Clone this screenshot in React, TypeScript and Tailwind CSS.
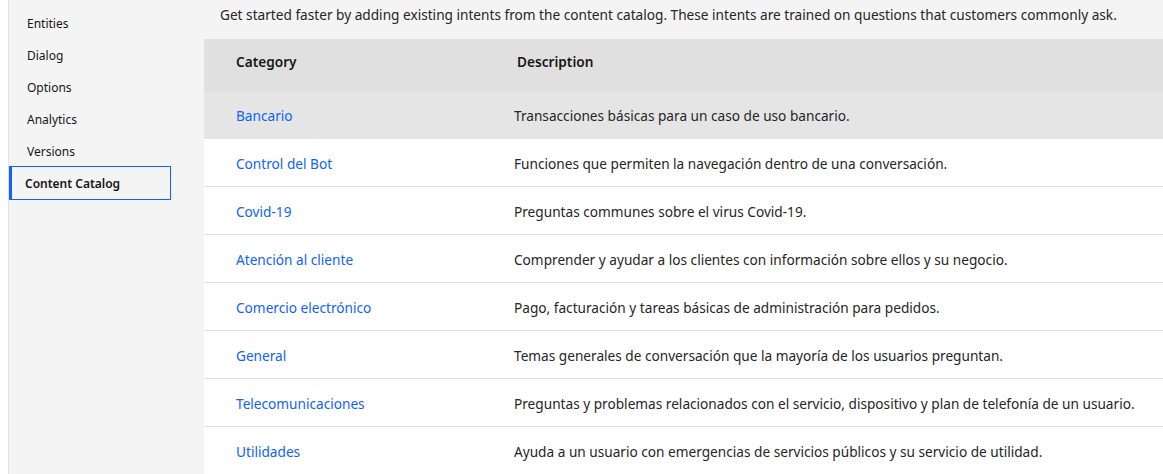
import React from 'react';

const navItems = ['Entities', 'Dialog', 'Options', 'Analytics', 'Versions'];

const rows = [
  { name: 'Bancario', desc: 'Transacciones básicas para un caso de uso bancario.' },
  { name: 'Control del Bot', desc: 'Funciones que permiten la navegación dentro de una conversación.' },
  { name: 'Covid-19', desc: 'Preguntas communes sobre el virus Covid-19.' },
  { name: 'Atención al cliente', desc: 'Comprender y ayudar a los clientes con información sobre ellos y su negocio.' },
  { name: 'Comercio electrónico', desc: 'Pago, facturación y tareas básicas de administración para pedidos.' },
  { name: 'General', desc: 'Temas generales de conversación que la mayoría de los usuarios preguntan.' },
  { name: 'Telecomunicaciones', desc: 'Preguntas y problemas relacionados con el servicio, dispositivo y plan de telefonía de un usuario.' },
  { name: 'Utilidades', desc: 'Ayuda a un usuario con emergencias de servicios públicos y su servicio de utilidad.' },
];

const App: React.FC = () => {
  return (
    <div
      className="flex h-[474px] w-[1163px] overflow-hidden bg-white text-[#161616]"
      style={{ fontFamily: '"Noto Sans", "Open Sans", sans-serif' }}
    >
      {/* left gutter */}
      <div className="w-[9px] shrink-0 border-r border-[#e0e0e0] bg-white" />

      {/* side nav */}
      <nav className="w-[194px] shrink-0 bg-[#f4f4f4] pt-[7px]">
        {navItems.map(item => (
          <div key={item} className="flex h-[32px] items-center pl-[18px] pt-[2px] text-[12px]">
            {item}
          </div>
        ))}
        <div className="-mt-px flex h-[34px] w-[162px] items-center border border-l-[3px] border-[#0f62fe] pl-[13px] pt-[2px] text-[12px] font-semibold">
          Content Catalog
        </div>
      </nav>

      {/* main */}
      <main className="flex-1 bg-[#f4f4f4] pl-px">
        <p className="flex h-[39px] items-center pb-[9px] pl-[16px] text-[13.65px] text-[#262626]">
          Get started faster by adding existing intents from the content catalog. These intents are trained on questions that customers commonly ask.
        </p>

        <div className="bg-white">
          <div className="grid h-[52px] grid-cols-[313px_1fr] items-center bg-[#e0e0e0] pb-[6px] text-[13.65px] font-semibold">
            <div className="pl-[32px]">Category</div>
            <div>Description</div>
          </div>
          {rows.map((row, i) => (
            <div
              key={row.name}
              className={
                i === 0
                  ? 'grid h-[48px] grid-cols-[310px_1fr] items-center border-b border-[#e5e5e5] bg-[#e5e5e5] pt-[4px] text-[13.65px]'
                  : 'grid h-[48px] grid-cols-[310px_1fr] items-center border-b border-[#e0e0e0] pt-[4px] text-[13.65px]'
              }
            >
              <div className="pl-[32px] text-[#0f62fe]">{row.name}</div>
              <div className="text-[#262626]">{row.desc}</div>
            </div>
          ))}
        </div>
      </main>
    </div>
  );
};

export default App;
